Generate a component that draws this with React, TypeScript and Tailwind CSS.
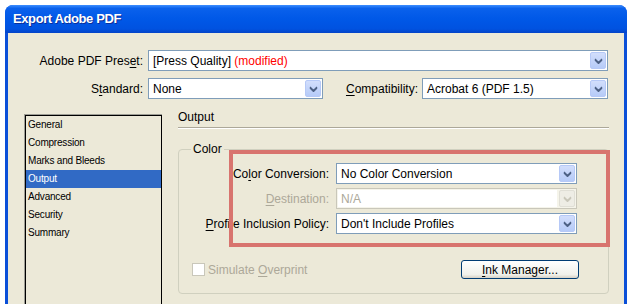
import type { ReactNode } from 'react';

const font = "font-['Liberation_Sans',Arial,sans-serif]";

function Chevron({ disabled }: { disabled?: boolean }) {
  return (
    <svg width="9" height="6" viewBox="0 0 9 6" className="block">
      <path
        d="M1 1 L4.5 4.5 L8 1 M1 2 L4.5 5.5 L8 2"
        fill="none"
        stroke={disabled ? '#C9C7BA' : '#4D6185'}
        strokeWidth="1.3"
      />
    </svg>
  );
}

function Combo({ value, width, disabled, children }: { value?: string; width: string; disabled?: boolean; children?: ReactNode }) {
  return (
    <div
      className={`${width} h-[21px] flex items-center border ${
        disabled ? 'border-[#C9C7BA] bg-[#F5F4EA]' : 'border-[#7F9DB9] bg-white'
      } pl-[4px] pr-[1px]`}
    >
      <div className={`flex-1 text-[12px] leading-[14px] whitespace-nowrap ${disabled ? 'text-[#ACA899] bg-white h-[17px] -ml-[3px] pl-[3px] flex items-center' : 'text-black'}`}>
        {children ?? value}
      </div>
      <div
        className={`ml-[2px] w-[16px] h-[17px] rounded-[2px] flex items-center justify-center border ${
          disabled
            ? 'border-[#E0DFD6] bg-[#EEEDE5]'
            : 'border-[#B6C9F7] bg-[linear-gradient(to_bottom,#D2DEFC,#B6CBF8)]'
        }`}
      >
        <Chevron disabled={disabled} />
      </div>
    </div>
  );
}

function U({ children }: { children: ReactNode }) {
  return <span className="underline underline-offset-[2px]">{children}</span>;
}

const items = ['General', 'Compression', 'Marks and Bleeds', 'Output', 'Advanced', 'Security', 'Summary'];

export default function App() {
  return (
    <div className={`relative w-[631px] h-[304px] overflow-hidden bg-white ${font}`}>
      {/* window */}
      <div className="ml-[5px] mt-[5px] w-[622px] h-[320px] rounded-t-[8px] bg-[#0A4FD8] flex flex-col">
        {/* title bar */}
        <div className="h-[28px] shrink-0 rounded-t-[8px] bg-[linear-gradient(to_bottom,#3D8EFF_0%,#0A61EC_12%,#0058E7_50%,#0052E0_85%,#0444C8_100%)] flex items-center pl-[8px]">
          <span className="text-white font-bold text-[13px] tracking-[-0.4px] [text-shadow:1px_1px_#0B2F9A]">Export Adobe PDF</span>
        </div>

        {/* body */}
        <div className="mx-[3px] flex-1 bg-[#ECE9D8] text-[12px] leading-[14px] text-black">
          {/* preset row */}
          <div className="mt-[17px] flex items-center">
            <div className="w-[135px] text-right">
              Adobe PDF Pres<U>e</U>t:
            </div>
            <div className="ml-[5px]">
              <Combo width="w-[460px]">
                [Press Quality] <span className="text-[#FF0000]">(modified)</span>
              </Combo>
            </div>
          </div>

          {/* standard / compatibility */}
          <div className="mt-[7px] flex items-center">
            <div className="w-[135px] text-right">
              S<U>t</U>andard:
            </div>
            <div className="ml-[5px]">
              <Combo width="w-[175px]" value="None" />
            </div>
            <div className="w-[99px] text-right pr-[4px]">
              <U>C</U>ompatibility:
            </div>
            <Combo width="w-[186px]" value="Acrobat 6 (PDF 1.5)" />
          </div>

          {/* lower section */}
          <div className="mt-[11px] flex">
            {/* list box */}
            <div className="ml-[16px] mt-[4px] w-[138px] h-[200px] border-l border-t border-[#9D9D95]">
              <div className="h-full border border-black">
                {items.map((it) => (
                  <div
                    key={it}
                    className={`h-[18px] pl-[2px] flex items-center text-[10px] tracking-[-0.2px] ${
                      it === 'Output' ? 'bg-[#316AC5] text-white' : ''
                    }`}
                  >
                    {it}
                  </div>
                ))}
              </div>
            </div>

            {/* right panel */}
            <div className="ml-[16px] w-[431px]">
              <div className="h-[14px]">Output</div>
              <div className="mt-[3px] h-[1px] bg-[#ACA899]" />
              <div className="h-[1px] bg-white" />

              <div className="relative mt-[20px] h-[145px] border border-[#D0D0BF] rounded-[4px]">
                <div className="absolute left-[12px] -top-[8px] bg-[#ECE9D8] px-[2px]">Color</div>

                <div className="pt-[13px] flex flex-col gap-[4px]">
                  <div className="flex items-center">
                    <div className="w-[150px] text-right">
                      Co<U>l</U>or Conversion:
                    </div>
                    <div className="ml-[7px]">
                      <Combo width="w-[241px]" value="No Color Conversion" />
                    </div>
                  </div>
                  <div className="flex items-center">
                    <div className="w-[150px] text-right text-[#ACA899]">
                      <U>D</U>estination:
                    </div>
                    <div className="ml-[7px]">
                      <Combo width="w-[241px]" value="N/A" disabled />
                    </div>
                  </div>
                  <div className="flex items-center">
                    <div className="w-[150px] text-right">
                      <U>P</U>rofile Inclusion Policy:
                    </div>
                    <div className="ml-[7px]">
                      <Combo width="w-[241px]" value="Don't Include Profiles" />
                    </div>
                  </div>
                </div>

                <div className="mt-[26px] flex items-center">
                  <div className="ml-[13px] w-[13px] h-[13px] border border-[#C9C7BA] bg-white" />
                  <span className="ml-[3px] text-[#ACA899]">
                    Simulate <U>O</U>verprint
                  </span>
                  <button className="ml-auto mr-[29px] w-[118px] h-[19px] rounded-[3px] border border-[#003C74] bg-[linear-gradient(to_bottom,#FFFFFF,#F0F0EA_80%,#D6D0C5)] text-[12px] leading-[14px] text-black">
                    <U>I</U>nk Manager...
                  </button>
                </div>
              </div>
            </div>
          </div>
        </div>
      </div>

      {/* red annotation frame */}
      <div className="absolute left-[229px] top-[150px] w-[381px] h-[97px] border-[4px] border-[#D8746E]" />
    </div>
  );
}
